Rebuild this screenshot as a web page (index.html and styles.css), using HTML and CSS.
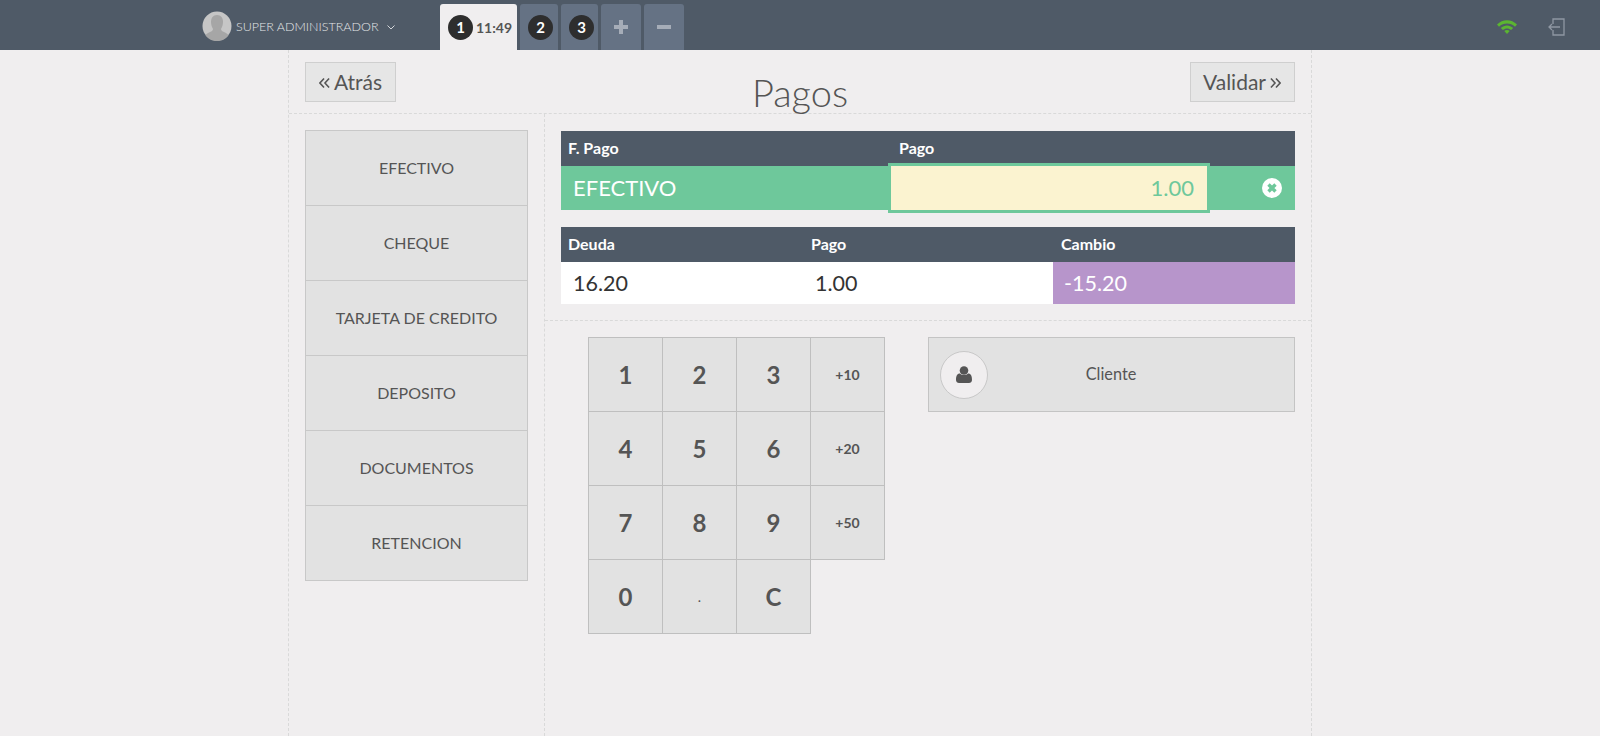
FILE: index.html
```html
<!DOCTYPE html>
<html lang="es">
<head>
    <meta charset="UTF-8">
    <meta name="viewport" content="width=device-width, initial-scale=1.0">
    <title>Pagos</title>
    <link rel="stylesheet" href="styles.css">
</head>
<body>
    <header class="topbar">
        <div class="user">
            <svg class="avatar" viewBox="0 0 30 30">
                <circle cx="15" cy="15" r="14.500" fill="#c6c6c6"/>
                <path d="M15 4c4 0 6 3 6 7 0 3-1 5-2 7 0 2 2 2.500 5 4 1.500.8 2.300 1.800 2.500 2.500a14.500 14.500 0 0 1-23 0c.2-.7 1-1.700 2.500-2.500 3-1.500 5-2 5-4C10 16 9 14 9 11c0-4 2-7 6-7z" fill="#a6a6a6"/>
            </svg>
            <span class="user-name">SUPER ADMINISTRADOR</span>
            <svg class="caret" viewBox="0 0 8 5"><polyline points="0.500,0.500 4,4 7.500,0.500"/></svg>
        </div>
        <nav class="tabs">
            <div class="tab tab-active"><span class="badge">1</span><span class="tab-time">11:49</span></div>
            <div class="tab tab-num"><span class="badge">2</span></div>
            <div class="tab tab-num tab-num2"><span class="badge">3</span></div>
            <div class="tab tab-op">
                <svg viewBox="0 0 14 14"><path d="M5 0h4v5h5v4H9v5H5V9H0V5h5z"/></svg>
            </div>
            <div class="tab tab-op">
                <svg viewBox="0 0 14 14"><path d="M0 5h14v4H0z"/></svg>
            </div>
        </nav>
        <div class="status">
            <svg class="wifi" viewBox="0 0 20 14">
                <path d="M0 4.500C5.500-1.200 14.500-1.200 20 4.500l-2 2.200C13.500 2.300 6.500 2.300 2 6.700z"/>
                <path d="M3.800 8C7.500 4.600 12.500 4.600 16.200 8l-2.100 2.100C11.500 8 8.500 8 5.900 10.100z"/>
                <path d="M7.300 11C9 9.800 11 9.800 12.700 11L10 14z"/>
            </svg>
            <svg class="logout" viewBox="0 0 18 18">
                <path d="M6 6V1h11v16H6v-5" />
                <path d="M13 9H2M5 6L2 9l3 3" />
            </svg>
        </div>
    </header>

    <main class="screen">
        <div class="screen-top">
            <button class="nav-btn nav-back">
                <svg class="dbl" viewBox="0 0 12 12"><polyline points="5.500,1 1,6 5.500,11"/><polyline points="11,1 6.500,6 11,11"/></svg>
                Atrás
            </button>
            <h1 class="title">Pagos</h1>
            <button class="nav-btn nav-next">
                Validar
                <svg class="dbl" viewBox="0 0 12 12"><polyline points="1,1 5.500,6 1,11"/><polyline points="6.500,1 11,6 6.500,11"/></svg>
            </button>
        </div>

        <div class="screen-body">
            <aside class="methods">
                <div class="method">EFECTIVO</div>
                <div class="method">CHEQUE</div>
                <div class="method">TARJETA DE CREDITO</div>
                <div class="method">DEPOSITO</div>
                <div class="method">DOCUMENTOS</div>
                <div class="method">RETENCION</div>
            </aside>

            <section class="right">
                <div class="summary">
                    <div class="lines">
                        <div class="line-head">
                            <div>F. Pago</div>
                            <div>Pago</div>
                            <div></div>
                        </div>
                        <div class="line-row">
                            <div class="line-name">EFECTIVO</div>
                            <div class="line-input">1.00</div>
                            <div class="line-del">
                                <svg viewBox="0 0 20 20">
                                    <circle cx="10" cy="10" r="10" fill="#fff"/>
                                    <path d="M6.500 6.500l7 7M13.500 6.500l-7 7" stroke="#6ec89b" stroke-width="3.400" fill="none"/>
                                </svg>
                            </div>
                        </div>
                    </div>
                    <div class="totals">
                        <div class="totals-head">
                            <div>Deuda</div>
                            <div>Pago</div>
                            <div>Cambio</div>
                        </div>
                        <div class="totals-row">
                            <div>16.20</div>
                            <div>1.00</div>
                            <div class="totals-change">-15.20</div>
                        </div>
                    </div>
                </div>

                <div class="lower">
                    <div class="keypad">
                        <div class="key">1</div>
                        <div class="key">2</div>
                        <div class="key">3</div>
                        <div class="key key-small">+10</div>
                        <div class="key">4</div>
                        <div class="key">5</div>
                        <div class="key">6</div>
                        <div class="key key-small">+20</div>
                        <div class="key">7</div>
                        <div class="key">8</div>
                        <div class="key">9</div>
                        <div class="key key-small">+50</div>
                        <div class="key">0</div>
                        <div class="key key-dot">.</div>
                        <div class="key">C</div>
                    </div>
                    <div class="client">
                        <span class="client-icon">
                            <svg viewBox="0 0 16 17">
                                <circle cx="8" cy="4.500" r="4.300"/>
                                <path d="M0 14c0-4 1-6.500 4-6.500 1 1 2.500 1.500 4 1.500s3-.5 4-1.500c3 0 4 2.500 4 6.500 0 2-1.500 3-3 3H3c-1.500 0-3-1-3-3z"/>
                            </svg>
                        </span>
                        <span class="client-name">Cliente</span>
                    </div>
                </div>
            </section>
        </div>
    </main>
</body>
</html>
```

FILE: styles.css
```css
* {
    box-sizing: border-box;
}
html, body {
    height: 100%;
}
body {
    margin: 0;
    display: flex;
    flex-direction: column;
    overflow: hidden;
    background: #f0eeef;
    color: #555;
    font-family: Lato, "Open Sans", sans-serif;
}

/* top bar */
.topbar {
    flex: none;
    display: flex;
    height: 50px;
    background: #4f5a67;
}
.user {
    width: 440px;
    padding: 11px 0 0 202px;
    display: flex;
    align-items: flex-start;
}
.avatar {
    width: 30px;
    height: 30px;
}
.user-name {
    margin: 8px 0 0 4px;
    color: #e4e6e8;
    font-size: 12.500px;
    font-weight: 300;
    line-height: 16px;
    white-space: nowrap;
}
.caret {
    width: 8px;
    height: 5px;
    margin: 14px 0 0 8px;
    fill: none;
    stroke: #d3d6da;
}
.tabs {
    display: flex;
    gap: 3px;
    padding-top: 4px;
}
.tab {
    display: flex;
    align-items: center;
    justify-content: center;
    height: 46px;
    background: #657284;
    border-radius: 3px 3px 0 0;
}
.tab-active {
    width: 77px;
    justify-content: flex-start;
    padding-left: 8px;
    background: #f0eeef;
}
.tab-num {
    width: 38px;
    justify-content: flex-start;
    padding-left: 8px;
}
.tab-num2 {
    width: 37px;
}
.tab-op {
    width: 40px;
}
.tab-op svg {
    width: 14px;
    height: 14px;
    fill: #a6adb8;
}
.badge {
    width: 25px;
    height: 25px;
    border-radius: 50%;
    background: #2e2e2e;
    color: #fff;
    font-size: 15px;
    font-weight: 700;
    line-height: 25px;
    text-align: center;
}
.tab-time {
    margin-left: 3px;
    color: #555;
    font-size: 14px;
    font-weight: 700;
}
.status {
    flex: 1;
    display: flex;
    justify-content: flex-end;
    padding: 18px 35px 0 0;
}
.wifi {
    width: 20px;
    height: 14px;
    margin: 2px 30px 0 0;
    fill: #5bb531;
}
.logout {
    width: 18px;
    height: 18px;
    fill: none;
    stroke: #8f97a3;
    stroke-width: 1.300;
}

/* main column */
.screen {
    flex: 1;
    display: flex;
    flex-direction: column;
    width: 1024px;
    margin-left: 288px;
    border-left: 1px dashed #d9d9d9;
    border-right: 1px dashed #d9d9d9;
}
.screen-top {
    flex: none;
    display: grid;
    grid-template-columns: 1fr auto 1fr;
    align-items: start;
    height: 64px;
    padding: 12px 16px 0;
    border-bottom: 1px dashed #d9d9d9;
}
.nav-btn {
    display: flex;
    align-items: center;
    gap: 4px;
    height: 40px;
    padding: 0 13px 2px;
    background: #e6e6e6;
    border: 1px solid #cfcfcf;
    color: #555;
    font-family: inherit;
    font-size: 21px;
}
.nav-back {
    justify-self: start;
}
.nav-next {
    justify-self: end;
    padding-left: 12px;
}
.dbl {
    width: 11px;
    height: 12px;
    margin-top: 3px;
    fill: none;
    stroke: #555;
    stroke-width: 1.700;
}
.title {
    margin: 10px 0 0;
    color: #555;
    font-size: 38px;
    font-weight: 300;
    line-height: 40px;
}
.screen-body {
    flex: 1;
    display: flex;
}

/* payment methods */
.methods {
    flex: none;
    width: 256px;
    padding: 16px 16px 0;
    border-right: 1px dashed #d9d9d9;
}
.method {
    display: flex;
    align-items: center;
    justify-content: center;
    height: 75px;
    padding-bottom: 1px;
    background: #e2e2e2;
    border: 1px solid #c8c8c8;
    border-bottom: 0;
    font-size: 16px;
}
.method:last-child {
    height: 76px;
    border-bottom: 1px solid #c8c8c8;
}

/* right side */
.right {
    flex: 1;
}
.summary {
    height: 207px;
    padding: 17px 16px 0;
    border-bottom: 1px dashed #d9d9d9;
}
.line-head,
.totals-head {
    display: grid;
    height: 35px;
    background: #4f5a67;
    color: #fff;
    font-size: 16px;
    font-weight: 700;
    line-height: 34px;
}
.line-head,
.line-row {
    grid-template-columns: 330px 316px 1fr;
}
.line-head div,
.totals-head div {
    padding-left: 8px;
}
.line-head div:first-child,
.totals-head div:first-child {
    padding-left: 7px;
}
.line-row {
    display: grid;
    height: 44px;
    background: #6ec89b;
    color: #fff;
    font-size: 22px;
    line-height: 44px;
}
.line-name {
    padding-left: 12px;
}
.line-input {
    height: 50px;
    margin: -3px -3px;
    padding-right: 13px;
    border: 3px solid #6ec89b;
    background: #fbf3d0;
    color: #6ec89b;
    text-align: right;
}
.line-del {
    display: flex;
    align-items: center;
    justify-content: flex-end;
    padding-right: 13px;
}
.line-del svg {
    width: 20px;
    height: 20px;
}
.totals {
    margin-top: 17px;
}
.totals-head,
.totals-row {
    grid-template-columns: 242px 250px 1fr;
}
.totals-row {
    display: grid;
    height: 42px;
    background: #fff;
    color: #333;
    font-size: 21.500px;
    line-height: 42px;
}
.totals-row div {
    padding-left: 12px;
}
.totals-row .totals-change {
    padding-left: 11px;
    background: #b795cb;
    color: #fff;
}

/* keypad and client */
.lower {
    display: flex;
    padding: 16px 16px 0 43px;
}
.keypad {
    display: grid;
    grid-template-columns: repeat(4, 74px);
    grid-auto-rows: 74px;
    align-self: flex-start;
    width: 297px;
}
.key {
    display: flex;
    align-items: center;
    justify-content: center;
    margin: 0 -1px -1px 0;
    background: #e2e2e2;
    border: 1px solid #bfbfbf;
    font-size: 24px;
    font-weight: 700;
}
.key-small {
    font-size: 14px;
}
.key-dot {
    font-size: 14px;
    font-weight: 400;
}
.client {
    display: flex;
    align-items: center;
    flex: 1;
    height: 75px;
    margin-left: 43px;
    padding-left: 11px;
    background: #e2e2e2;
    border: 1px solid #c4c4c4;
}
.client-icon {
    display: flex;
    align-items: center;
    justify-content: center;
    width: 48px;
    height: 48px;
    border-radius: 50%;
    background: #f0eeef;
    border: 1px solid #c8c8c8;
}
.client-icon svg {
    width: 16px;
    height: 17px;
    fill: #555;
}
.client-name {
    flex: 1;
    padding: 0 60px 2px 0;
    font-size: 16.300px;
    text-align: center;
}
```
